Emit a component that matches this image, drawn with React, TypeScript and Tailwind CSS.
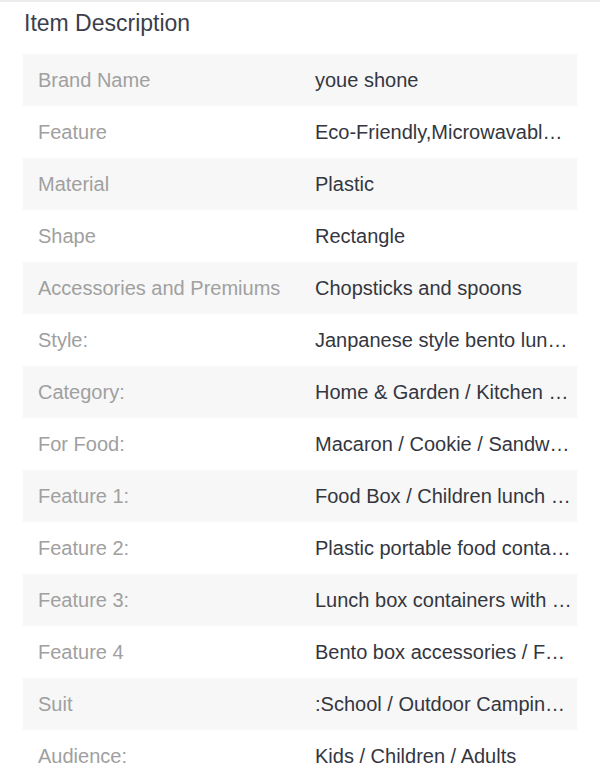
import React from 'react';

// values are shown clipped in the reference, so keep the visible text as-is
const rows: [string, string][] = [
    ['Brand Name', 'youe shone'],
    ['Feature', 'Eco-Friendly,Microwavabl…'],
    ['Material', 'Plastic'],
    ['Shape', 'Rectangle'],
    ['Accessories and Premiums', 'Chopsticks and spoons'],
    ['Style:', 'Janpanese style bento lun…'],
    ['Category:', 'Home & Garden / Kitchen …'],
    ['For Food:', 'Macaron / Cookie / Sandw…'],
    ['Feature 1:', 'Food Box / Children lunch …'],
    ['Feature 2:', 'Plastic portable food conta…'],
    ['Feature 3:', 'Lunch box containers with …'],
    ['Feature 4', 'Bento box accessories / F…'],
    ['Suit', ':School / Outdoor Campin…'],
    ['Audience:', 'Kids / Children / Adults'],
];

export default function App() {
    return (
        <div
            className="w-[600px] h-[782px] overflow-hidden bg-white border-t-2 border-[#ececec]"
            style={{ fontFamily: '"Liberation Sans", Arial, sans-serif' }}
        >
            <h1 className="pl-[24px] pt-[6px] h-[52px] text-[23px] leading-[30px] text-[#3b3e4c]">
                Item Description
            </h1>
            <div className="mx-[23px]">
                {rows.map(([label, value], i) => (
                    <div
                        key={label}
                        className={`flex items-center h-[52px] text-[20px] ${i % 2 === 0 ? 'bg-[#f7f7f7]' : 'bg-white'}`}
                    >
                        <div className="w-[292px] shrink-0 pl-[15px] text-[#a0a0a0] whitespace-nowrap">{label}</div>
                        <div className="flex-1 min-w-0 text-[#34363f] whitespace-nowrap">{value}</div>
                    </div>
                ))}
            </div>
        </div>
    );
}
